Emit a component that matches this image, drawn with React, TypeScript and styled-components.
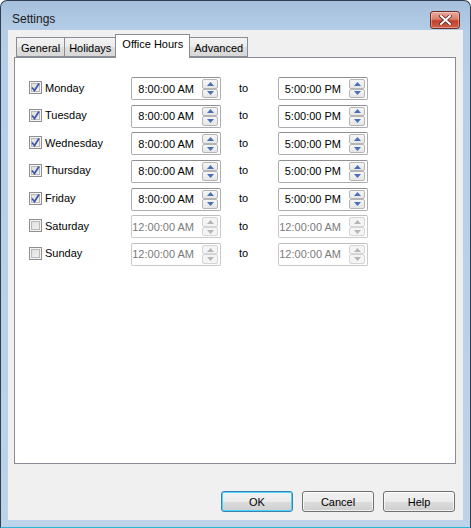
import * as React from 'react'
import styled, { createGlobalStyle } from 'styled-components'

const GlobalStyle = createGlobalStyle`
  html, body {
    margin: 0;
    padding: 0;
    background: #ffffff;
  }
  body {
    font-family: "Liberation Sans", Arial, sans-serif;
    font-size: 11px;
    color: #000;
  }
`

const Window = styled.div`
  box-sizing: border-box;
  width: 471px;
  height: 528px;
  border: 1px solid #2e3f52;
  border-bottom-color: #2fb4d8;
  border-radius: 7px 7px 0 0;
  background: linear-gradient(to bottom, #a6c0dc 0px, #b5cde7 30px, #bcd3ea 100%);
  display: flex;
  flex-direction: column;
  padding: 0 7px 7px 7px;
`

const TitleBar = styled.div`
  height: 29px;
  display: flex;
  align-items: center;
  justify-content: space-between;
  padding: 0 2px 0 4px;
`

const Title = styled.span`
  font-size: 12px;
  color: #1a1a1a;
  padding-top: 6px;
`

const CloseButton = styled.div`
  box-sizing: border-box;
  width: 30px;
  height: 18px;
  margin-top: 8px;
  margin-right: 1px;
  border: 1px solid #6e2d24;
  border-radius: 3px;
  background: linear-gradient(to bottom, #e9a99c 0%, #d9806d 45%, #c2402a 55%, #d0604a 100%);
  box-shadow: inset 0 0 0 1px rgba(255, 255, 255, 0.35);
  display: flex;
  align-items: center;
  justify-content: center;
`

const Client = styled.div`
  flex: 1;
  background: #f0f0f0;
  display: flex;
  flex-direction: column;
  padding: 5px 8px 0 6px;
`

const TabStrip = styled.div`
  display: flex;
  align-items: flex-end;
  height: 22px;
  padding-left: 2px;
  position: relative;
  z-index: 1;
`

const Tab = styled.div<{ $active?: boolean }>`
  box-sizing: border-box;
  height: ${p => (p.$active ? '24px' : '20px')};
  margin-bottom: ${p => (p.$active ? '-1px' : '0')};
  margin-right: -1px;
  padding: ${p => (p.$active ? '3px 6px 0 6px' : '4px 4px 0 4px')};
  border: 1px solid #898c95;
  border-bottom: ${p => (p.$active ? 'none' : '1px solid #898c95')};
  background: ${p =>
    p.$active ? '#ffffff' : 'linear-gradient(to bottom, #f3f3f3 0%, #ebebeb 50%, #dedede 51%, #d8d8d8 100%)'};
  font-size: 11px;
  color: #000;
  position: relative;
  z-index: ${p => (p.$active ? 2 : 0)};
`

const Panel = styled.div`
  box-sizing: border-box;
  width: 442px;
  height: 407px;
  background: #ffffff;
  border: 1px solid #898c95;
  padding: 19px 0 0 14px;
  display: flex;
  flex-direction: column;
  gap: 4.67px;
`

const Row = styled.div`
  display: grid;
  grid-template-columns: 102px 90px 57px 90px;
  height: 23px;
  align-items: center;
`

const DayLabel = styled.label`
  display: flex;
  align-items: center;
  gap: 3px;
  font-size: 11px;
  color: #000;
  margin-top: -2px;
`

const Box = styled.span`
  box-sizing: border-box;
  width: 13px;
  height: 13px;
  border: 1px solid #8f8f8f;
  background: linear-gradient(135deg, #dcdcdc 0%, #f4f4f4 100%);
  box-shadow: inset 0 0 0 1px #f4f4f4, inset 0 0 0 2px #b9b9b9;
  display: flex;
  align-items: center;
  justify-content: center;
`

const TimeBox = styled.div<{ $disabled?: boolean }>`
  box-sizing: border-box;
  height: 23px;
  border: 1px solid ${p => (p.$disabled ? '#c9c9c9' : '#abadb3')};
  border-top-color: ${p => (p.$disabled ? '#bdbdbd' : '#8e8f8f')};
  border-radius: 2px;
  background: #ffffff;
  display: flex;
  align-items: center;
  justify-content: flex-end;
  padding-right: 2px;
`

const TimeText = styled.span<{ $disabled?: boolean }>`
  flex: 1;
  text-align: right;
  padding-right: 8px;
  font-size: 11px;
  color: ${p => (p.$disabled ? '#7a7a7a' : '#000')};
  white-space: nowrap;
  overflow: hidden;
`

const Spin = styled.div`
  display: flex;
  flex-direction: column;
  width: 16px;
  height: 19px;
`

const SpinHalf = styled.div<{ $disabled?: boolean }>`
  box-sizing: border-box;
  flex: 1;
  border: 1px solid ${p => (p.$disabled ? '#d5d5d5' : '#b5b5b5')};
  border-radius: 2px;
  background: ${p =>
    p.$disabled ? '#f4f4f4' : 'linear-gradient(to bottom, #f6f6f6 0%, #e6e6e6 100%)'};
  display: flex;
  align-items: center;
  justify-content: center;
`

const To = styled.span`
  padding-left: 18px;
  font-size: 11px;
  margin-top: -2px;
`

const Footer = styled.div`
  display: flex;
  justify-content: flex-end;
  gap: 9px;
  padding: 27px 0 0 0;
`

const Button = styled.div<{ $default?: boolean }>`
  box-sizing: border-box;
  width: 72px;
  height: 21px;
  border: 1px solid ${p => (p.$default ? '#3c7fb1' : '#707070')};
  border-radius: 3px;
  background: linear-gradient(to bottom, #f2f2f2 0%, #ebebeb 50%, #dddddd 51%, #cfcfcf 100%);
  box-shadow: inset 0 0 0 1px ${p => (p.$default ? '#48d7fb' : 'rgba(255,255,255,0.7)')};
  display: flex;
  align-items: center;
  justify-content: center;
  font-size: 11px;
  color: #000;
`

const Check = () => (
  <svg width="9" height="9" viewBox="0 0 9 9">
    <path d="M1 4.5 L3.5 7.5 L8 0.5" fill="none" stroke="#3e57a8" strokeWidth="1.8" />
  </svg>
)

const Arrow = ({ up, disabled }: { up?: boolean; disabled?: boolean }) => (
  <svg width="7" height="4" viewBox="0 0 7 4">
    <path
      d={up ? 'M0 4 L3.5 0 L7 4 Z' : 'M0 0 L3.5 4 L7 0 Z'}
      fill={disabled ? '#b5b5b5' : '#4d6fb5'}
    />
  </svg>
)

const TimeField = ({ value, disabled }: { value: string; disabled?: boolean }) => (
  <TimeBox $disabled={disabled}>
    <TimeText $disabled={disabled}>{value}</TimeText>
    <Spin>
      <SpinHalf $disabled={disabled}><Arrow up disabled={disabled} /></SpinHalf>
      <SpinHalf $disabled={disabled}><Arrow disabled={disabled} /></SpinHalf>
    </Spin>
  </TimeBox>
)

const days = [
  { name: 'Monday', on: true },
  { name: 'Tuesday', on: true },
  { name: 'Wednesday', on: true },
  { name: 'Thursday', on: true },
  { name: 'Friday', on: true },
  { name: 'Saturday', on: false },
  { name: 'Sunday', on: false },
]

export default function App() {
  return (
    <>
      <GlobalStyle />
      <Window>
        <TitleBar>
          <Title>Settings</Title>
          <CloseButton>
            <svg width="13" height="10" viewBox="0 0 13 10">
              <path d="M2 1 L11 9 M11 1 L2 9" stroke="#5a2a22" strokeWidth="3.6" strokeLinecap="square" />
              <path d="M2 1 L11 9 M11 1 L2 9" stroke="#ffffff" strokeWidth="2" strokeLinecap="square" />
            </svg>
          </CloseButton>
        </TitleBar>
        <Client>
          <TabStrip>
            <Tab>General</Tab>
            <Tab>Holidays</Tab>
            <Tab $active>Office Hours</Tab>
            <Tab>Advanced</Tab>
          </TabStrip>
          <Panel>
            {days.map(d => (
              <Row key={d.name}>
                <DayLabel>
                  <Box>{d.on && <Check />}</Box>
                  {d.name}
                </DayLabel>
                <TimeField value={d.on ? '8:00:00 AM' : '12:00:00 AM'} disabled={!d.on} />
                <To>to</To>
                <TimeField value={d.on ? '5:00:00 PM' : '12:00:00 AM'} disabled={!d.on} />
              </Row>
            ))}
          </Panel>
          <Footer>
            <Button $default>OK</Button>
            <Button>Cancel</Button>
            <Button>Help</Button>
          </Footer>
        </Client>
      </Window>
    </>
  )
}
